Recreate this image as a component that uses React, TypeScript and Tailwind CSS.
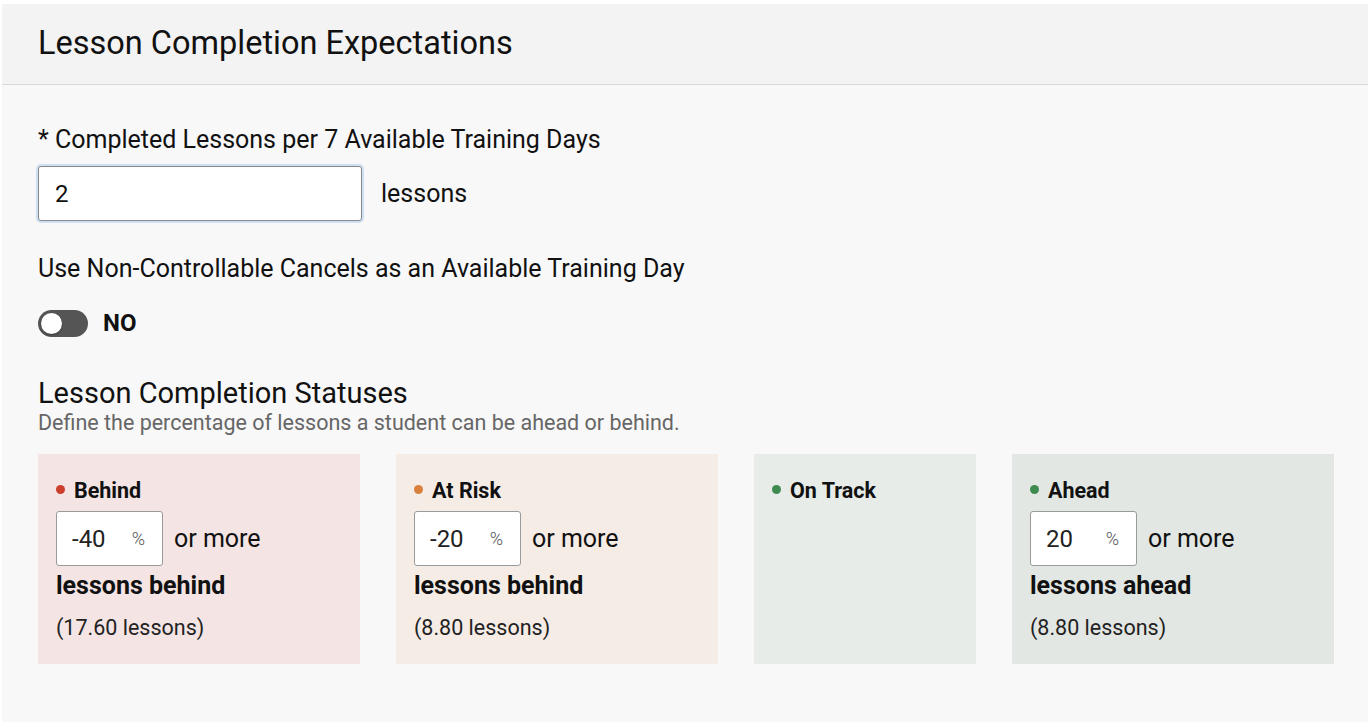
import { useState } from "react";

type Status = {
  label: string;
  dot: string;
  bg: string;
  width: string;
  value?: string;
  suffix?: string;
  count?: string;
};

const statuses: Status[] = [
  { label: "Behind", dot: "bg-[#cc3f2c]", bg: "bg-[#f4e5e4]", width: "w-[322px]", value: "-40", suffix: "lessons behind", count: "(17.60 lessons)" },
  { label: "At Risk", dot: "bg-[#d9803c]", bg: "bg-[#f5ece6]", width: "w-[322px]", value: "-20", suffix: "lessons behind", count: "(8.80 lessons)" },
  { label: "On Track", dot: "bg-[#3f8a4f]", bg: "bg-[#e7ece8]", width: "w-[222px]" },
  { label: "Ahead", dot: "bg-[#3f8a4f]", bg: "bg-[#e2e7e3]", width: "w-[322px]", value: "20", suffix: "lessons ahead", count: "(8.80 lessons)" },
];

const StatusCard = ({ s }: { s: Status }) => {
  return (
    <div className={`${s.width} ${s.bg} h-[210px] px-[18px] pt-[26px]`}>
      <div className="flex items-center gap-[9px] h-[22px]">
        <span className={`w-[9px] h-[9px] rounded-full ${s.dot} -mt-[4px] shrink-0`}></span>
        <span className="text-[21.5px] font-bold text-[#111] leading-[22px]">{s.label}</span>
      </div>
      {s.value && (
        <>
          <div className="flex items-center mt-[9px]">
            <div className="w-[107px] h-[55px] bg-white border border-[#9a9a9a] rounded-[3px] flex items-center pl-[15px] pr-[17px]">
              <span className="text-[24px] text-[#222] flex-1">{s.value}</span>
              <span className="text-[18px] font-light text-[#555]">%</span>
            </div>
            <span className="ml-[11px] text-[25px] text-[#111]">or more</span>
          </div>
          <div className="mt-[4px] text-[25px] font-bold text-[#111] leading-[32px]">{s.suffix}</div>
          <div className="mt-[13px] text-[21.5px] text-[#222] leading-[26px]">{s.count}</div>
        </>
      )}
    </div>
  );
};

const App = () => {
  const [lessons, setLessons] = useState("2");
  const [useCancels, setUseCancels] = useState(false);

  return (
    <div className="w-[1368px] h-[722px] bg-white pt-[4px] pl-[2px] font-['Roboto',sans-serif] text-[#111]">
      <div className="h-full bg-[#f8f8f8]">
        {/* 헤더 */}
        <div className="h-[81px] bg-[#f3f3f3] border-b border-[#d9d9d9] flex items-center pl-[36px]">
          <h1 className="text-[32.5px] text-[#111] -mt-[2px]">Lesson Completion Expectations</h1>
        </div>

        <div className="pl-[36px] pt-[39px]">
          <label className="block text-[25px] leading-[32px]">* Completed Lessons per 7 Available Training Days</label>
          <div className="flex items-center mt-[10px]">
            <input
              value={lessons}
              onChange={(e) => setLessons(e.target.value)}
              className="w-[324px] h-[55px] bg-white border border-[#8a8a8a] rounded-[3px] px-[16px] text-[24px] outline-none shadow-[0_0_0_2px_#cfe0f3]"
            />
            <span className="ml-[19px] text-[25px]">lessons</span>
          </div>

          <div className="mt-[32px] text-[25px] leading-[32px]">Use Non-Controllable Cancels as an Available Training Day</div>

          {/* 토글 */}
          <div className="flex items-center mt-[25px]">
            <button
              onClick={() => setUseCancels(!useCancels)}
              className={`w-[50px] h-[27px] rounded-full p-[3px] flex ${useCancels ? "bg-[#3f8a4f] justify-end" : "bg-[#555] justify-start"}`}
            >
              <span className="w-[21px] h-[21px] rounded-full bg-white block shadow-[0_1px_2px_rgba(0,0,0,0.3)]"></span>
            </button>
            <span className="ml-[15px] text-[24px] font-bold leading-[27px]">{useCancels ? "YES" : "NO"}</span>
          </div>

          <h2 className="mt-[39px] text-[29px] leading-[34px]">Lesson Completion Statuses</h2>
          <p className="text-[21.5px] text-[#666] leading-[26px]">Define the percentage of lessons a student can be ahead or behind.</p>

          <div className="flex gap-[36px] mt-[18px]">
            {statuses.map((s) => (
              <StatusCard key={s.label} s={s} />
            ))}
          </div>
        </div>
      </div>
    </div>
  );
};

export default App;
